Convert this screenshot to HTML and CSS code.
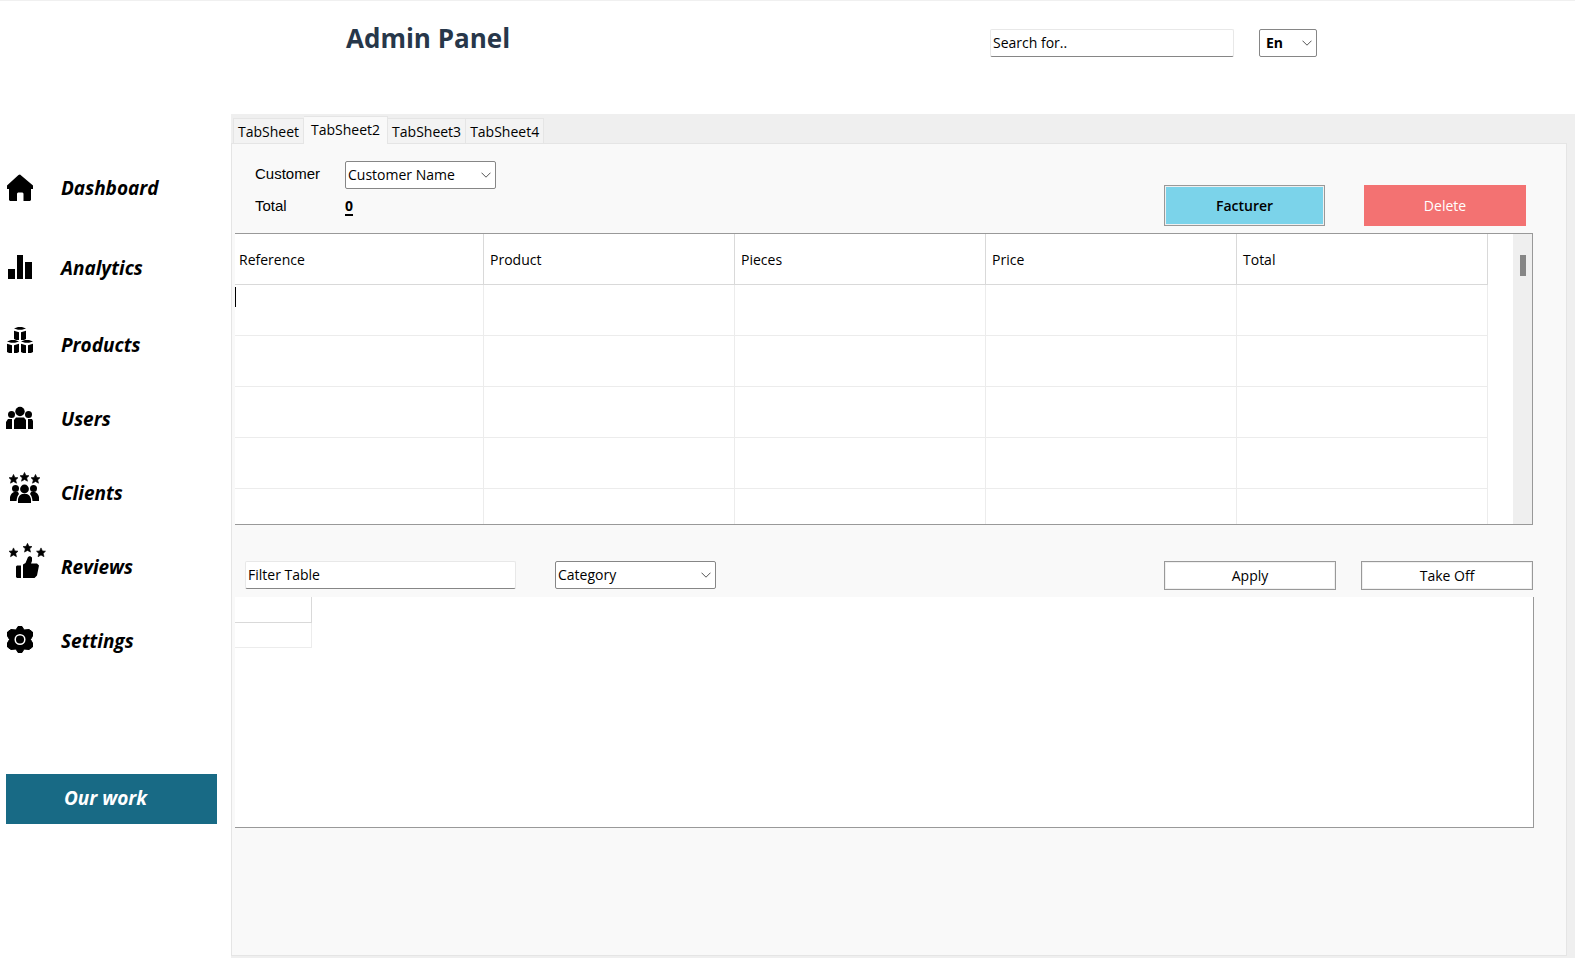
FILE: index.html
```html
<!DOCTYPE html>
<html lang="en">
<head>
<meta charset="utf-8">
<title>Admin Panel</title>
<link rel="stylesheet" href="styles.css">
</head>
<body>
<header class="header">
  <h1 class="title">Admin Panel</h1>
  <div class="header-tools">
    <input class="field search" type="text" value="Search for.." aria-label="Search">
    <div class="picker picker-lang">
      <select class="picker-select" aria-label="Language"><option>En</option></select>
      <svg class="chevron" viewBox="0 0 10 6"><path d="M.5.7 5 5.2 9.5.7"/></svg>
    </div>
  </div>
</header>
<div class="layout">
  <aside class="sidebar">
    <nav class="nav">
      <a class="nav-item nav-home" href="#dashboard">
        <svg class="nav-icon" viewBox="0 0 48 48"><path d="M20 10.5 33 21.500V25H31V36L30 37H23.500V29.500L22.500 28.500H18L17 29.500V37H10L9 36V25H7V21.500L18.500 11Z"/></svg>
        <span>Dashboard</span></a>
      <a class="nav-item nav-stats" href="#analytics">
        <svg class="nav-icon" viewBox="0 0 48 48"><path d="M8 25h7v10H8zM17 11h6v24h-6zM25 18h7v17h-7z"/></svg>
        <span>Analytics</span></a>
      <a class="nav-item" href="#products">
        <svg class="nav-icon" viewBox="0 0 48 48">
          <defs><g id="crate"><path d="M0 1.500 4 0h4l4 1.500L8 2.800H4zM0 3.800l5 1.400v7.800H2L0 12zM12 3.800 7 5.200v7.800H10l2-1z"/></g></defs>
          <use href="#crate" x="14" y="6"/><use href="#crate" x="7" y="19"/><use href="#crate" x="21" y="19"/></svg>
        <span>Products</span></a>
      <a class="nav-item" href="#users">
        <svg class="nav-icon" viewBox="0 0 48 48"><circle cx="20" cy="16.500" r="4.700"/><circle cx="11.500" cy="19.500" r="3.500"/><circle cx="28.500" cy="19.500" r="3.500"/><path d="M14 34V25l2-2.500h8l2 2.500v9zM6 34v-7l2-3h4v10zM28 34V24h4l1 2v8z"/></svg>
        <span>Users</span></a>
      <a class="nav-item" href="#clients">
        <svg class="nav-icon" viewBox="0 0 48 48">
          <defs><path id="star" stroke="#000" stroke-width=".6" d="M0-4.600 1.400-1.600 4.500-1.300 2.200.9 3 4.200 0 2.500-3 4.200-2.200.9-4.500-1.300-1.400-1.600Z"/></defs>
          <use href="#star" x="13.500" y="10"/><use href="#star" x="24.500" y="8"/><use href="#star" x="35.500" y="10"/>
          <circle cx="24.500" cy="20" r="4.400"/><circle cx="15.500" cy="19.500" r="3.500"/><circle cx="33.500" cy="19.500" r="3.500"/>
          <path d="M18 34v-4q1-4 4-5h5q3 1 4 5v4zM10 32v-4q1-4 4-5h4l1 2q-2 2-2.500 7zM39 32v-4q-1-4-4-5h-4l-1 2q2 2 2.500 7z"/></svg>
        <span>Clients</span></a>
      <a class="nav-item" href="#reviews">
        <svg class="nav-icon" viewBox="0 0 48 48">
          <use href="#star" x="13.500" y="9.500"/><use href="#star" x="27.500" y="4.900"/><use href="#star" x="41" y="9.500"/>
          <path d="M16 23.500 17 22.500H21V35H17L16 34ZM23 21.500 25.500 20 28 14 30 13 32 14.500V18L31 20.500H37L39 22.500 37 32.500 34.500 35H23Z"/></svg>
        <span>Reviews</span></a>
      <a class="nav-item" href="#settings">
        <svg class="nav-icon" viewBox="0 0 48 48"><path stroke="#000" stroke-linejoin="round" d="M18 9.500h4l2 3.500 5-.5 3.500 2.500v4l-2 3.500 2 3.500v4L29 32.500l-5-.5-2 3.500h-4L16 32l-5 .5L7.500 30v-4l2-3.500-2-3.500v-4l3.500-2.500 5 .5z"/><circle class="ring" cx="20" cy="22.500" r="4.800"/></svg>
        <span>Settings</span></a>
    </nav>
    <button class="work" type="button">Our work</button>
  </aside>
  <main class="main">
    <div class="tabs" role="tablist">
      <button class="tab tab-first" type="button" role="tab">TabSheet</button>
      <button class="tab tab-active" type="button" role="tab" aria-selected="true">TabSheet2</button>
      <button class="tab" type="button" role="tab">TabSheet3</button>
      <button class="tab" type="button" role="tab">TabSheet4</button>
    </div>
    <section class="panel">
      <div class="order">
        <div class="order-form">
          <label for="customer">Customer</label>
          <div class="picker picker-customer">
            <select class="picker-select" id="customer"><option>Customer Name</option></select>
            <svg class="chevron" viewBox="0 0 10 6"><path d="M.5.7 5 5.200 9.500.7"/></svg>
          </div>
          <span>Total</span>
          <output class="sum">0</output>
        </div>
        <div class="order-actions">
          <button class="action action-bill" type="button">Facturer</button>
          <button class="action action-delete" type="button">Delete</button>
        </div>
      </div>
      <div class="grid-box">
        <div class="grid-body">
          <table class="grid">
            <thead><tr><th>Reference</th><th>Product</th><th>Pieces</th><th>Price</th><th>Total</th></tr></thead>
            <tbody>
              <tr><td><span class="caret"></span></td><td></td><td></td><td></td><td></td></tr>
              <tr><td></td><td></td><td></td><td></td><td></td></tr>
              <tr><td></td><td></td><td></td><td></td><td></td></tr>
              <tr><td></td><td></td><td></td><td></td><td></td></tr>
              <tr><td></td><td></td><td></td><td></td><td></td></tr>
            </tbody>
          </table>
        </div>
        <div class="scroll"><div class="thumb"></div></div>
      </div>
      <div class="filters">
        <input class="field filter" type="text" value="Filter Table" aria-label="Filter table">
        <div class="picker picker-category">
          <select class="picker-select" aria-label="Category"><option>Category</option></select>
          <svg class="chevron" viewBox="0 0 10 6"><path d="M.5.7 5 5.200 9.500.7"/></svg>
        </div>
        <div class="filter-actions">
          <button class="plain" type="button">Apply</button>
          <button class="plain" type="button">Take Off</button>
        </div>
      </div>
      <div class="results">
        <table class="mini"><thead><tr><th></th></tr></thead><tbody><tr><td></td></tr></tbody></table>
      </div>
    </section>
  </main>
</div>
</body>
</html>
```

FILE: styles.css
```css
* { box-sizing: border-box; }
body {
  margin: 0;
  min-height: 100vh;
  display: flex;
  flex-direction: column;
  background: #fff;
  color: #000;
  font: 14px/20px "Open Sans", "Noto Sans", sans-serif;
}
button, input, select { font: inherit; color: inherit; margin: 0; }

.header {
  height: 114px;
  display: flex;
  align-items: flex-start;
  border-top: 1px solid #f0f0f0;
  padding: 0 258px 0 346px;
}
.title {
  margin: 17px 0 0;
  color: #27374a;
  font-size: 26px;
  line-height: 40px;
  font-weight: 700;
}
.header-tools { display: flex; gap: 25px; margin: 28px 0 0 auto; }

.field {
  height: 28px;
  padding: 0 2px 2px;
  border: 1px solid #e8e8e8;
  border-bottom-color: #868686;
  border-radius: 2px;
  background: #fff;
}
.search { width: 244px; }
.filter { width: 271px; }

.picker { position: relative; height: 28px; }
.picker-select {
  width: 100%;
  height: 100%;
  padding: 0 2px;
  appearance: none;
  border: 1px solid #868686;
  border-radius: 2px;
  background: #fff;
}
.chevron {
  position: absolute;
  right: 5px;
  top: 11px;
  width: 10px;
  height: 6px;
  fill: none;
  stroke: #555;
  pointer-events: none;
}
.picker-lang { width: 58px; font-weight: 700; }
.picker-lang .picker-select { padding-left: 6px; }
.picker-customer { width: 151px; }
.picker-category { width: 161px; }

.layout { flex: 1; display: flex; }
.sidebar { width: 231px; flex: none; padding-top: 37px; }
.nav { display: flex; flex-direction: column; }
.nav-item {
  height: 74px;
  display: flex;
  align-items: center;
  gap: 13px;
  color: #000;
  font-size: 19px;
  line-height: 24px;
  font-weight: 700;
  font-style: italic;
  text-decoration: none;
}
.nav-home { margin-bottom: 6px; }
.nav-stats { margin-bottom: 3px; }
.nav-icon { width: 48px; height: 48px; flex: none; }
.ring { fill: none; stroke: #fff; stroke-width: 1.5; }
.work {
  display: block;
  width: 211px;
  height: 50px;
  margin: 96px 0 0 6px;
  padding: 0 12px 2px 0;
  border: 0;
  background: #186a85;
  color: #fff;
  font-size: 19px;
  line-height: 24px;
  font-weight: 700;
  font-style: italic;
}

.main {
  flex: 1;
  min-width: 0;
  display: flex;
  flex-direction: column;
  padding: 2px 8px 2px 0;
  background: #efefef;
}
.tabs { display: flex; align-items: flex-end; height: 27px; padding-left: 2px; }
.tab {
  height: 25px;
  padding: 1px 4px 0;
  border: 1px solid #e5e5e5;
  border-width: 1px 1px 0 0;
  background: #f3f3f3;
  white-space: nowrap;
}
.tab-first { border-left-width: 1px; }
.tab-active {
  height: 28px;
  padding: 0 7px 1px;
  background: #f9f9f9;
  position: relative;
  margin-bottom: -1px;
}
.panel {
  flex: 1;
  border: 1px solid #e5e5e5;
  padding-left: 3px;
  background: #f9f9f9;
}
.order { display: flex; justify-content: space-between; padding: 17px 40px 7px 20px; }
.order-form {
  display: grid;
  grid-template: 28px 33px / 90px auto;
  align-items: center;
  align-content: start;
}
.order-form label, .order-form > span {
  font-family: "Liberation Sans", Arial, sans-serif;
  font-size: 15px;
}
.order-form label { padding-bottom: 2px; }
.sum { font-weight: 700; text-decoration: underline; text-decoration-thickness: 2px; text-underline-offset: 3px; }
.order-actions { display: flex; gap: 39px; padding-top: 24px; }
.action { height: 41px; width: 162px; font-weight: 500; }
.action-bill {
  width: 161px;
  border: 1px solid #999;
  background: #7bd3ea;
  box-shadow: inset 0 0 0 1px #f0f0f0;
  font-weight: 600;
}
.action-delete { border: 0; background: #f37272; color: #fff; }

.grid-box {
  display: flex;
  height: 292px;
  margin-right: 33px;
  border: 1px solid #999;
  border-left: 0;
  background: #fff;
  overflow: hidden;
}
.grid-body { flex: 1; padding-right: 25px; }
.grid { width: 100%; table-layout: fixed; border-collapse: separate; border-spacing: 0; }
.grid th, .grid td {
  height: 51px;
  padding: 1px 0 0 6px;
  border: 1px solid #ececec;
  border-width: 0 1px 1px 0;
  text-align: left;
  font-weight: 400;
}
.grid th { border-color: #d9d9d9; }
.grid th:first-child { width: 249px; padding-left: 4px; }
.grid td:first-child { padding: 2px 0 0; vertical-align: top; }
.caret { display: block; width: 1px; height: 20px; background: #000; }
.scroll { width: 19px; padding: 21px 6px 0 7px; background: #efefef; }
.thumb { height: 21px; background: #868686; }

.filters { display: flex; align-items: flex-start; gap: 39px; padding: 36px 33px 7px 10px; }
.filter-actions { display: flex; gap: 25px; margin-left: auto; }
.plain {
  width: 172px;
  height: 29px;
  padding: 0;
  border: 1px solid #999;
  background: #fff;
  box-shadow: inset 0 0 0 1px #f0f0f0;
}
.results {
  height: 231px;
  margin-right: 32px;
  border: 1px solid #999;
  border-width: 0 1px 1px 0;
  background: #fff;
}
.mini { border-collapse: separate; border-spacing: 0; }
.mini th, .mini td {
  width: 77px;
  height: 25px;
  padding: 0;
  border: 1px solid #ececec;
  border-width: 0 1px 1px 0;
}
.mini th { height: 26px; border-color: #d9d9d9; }
```
